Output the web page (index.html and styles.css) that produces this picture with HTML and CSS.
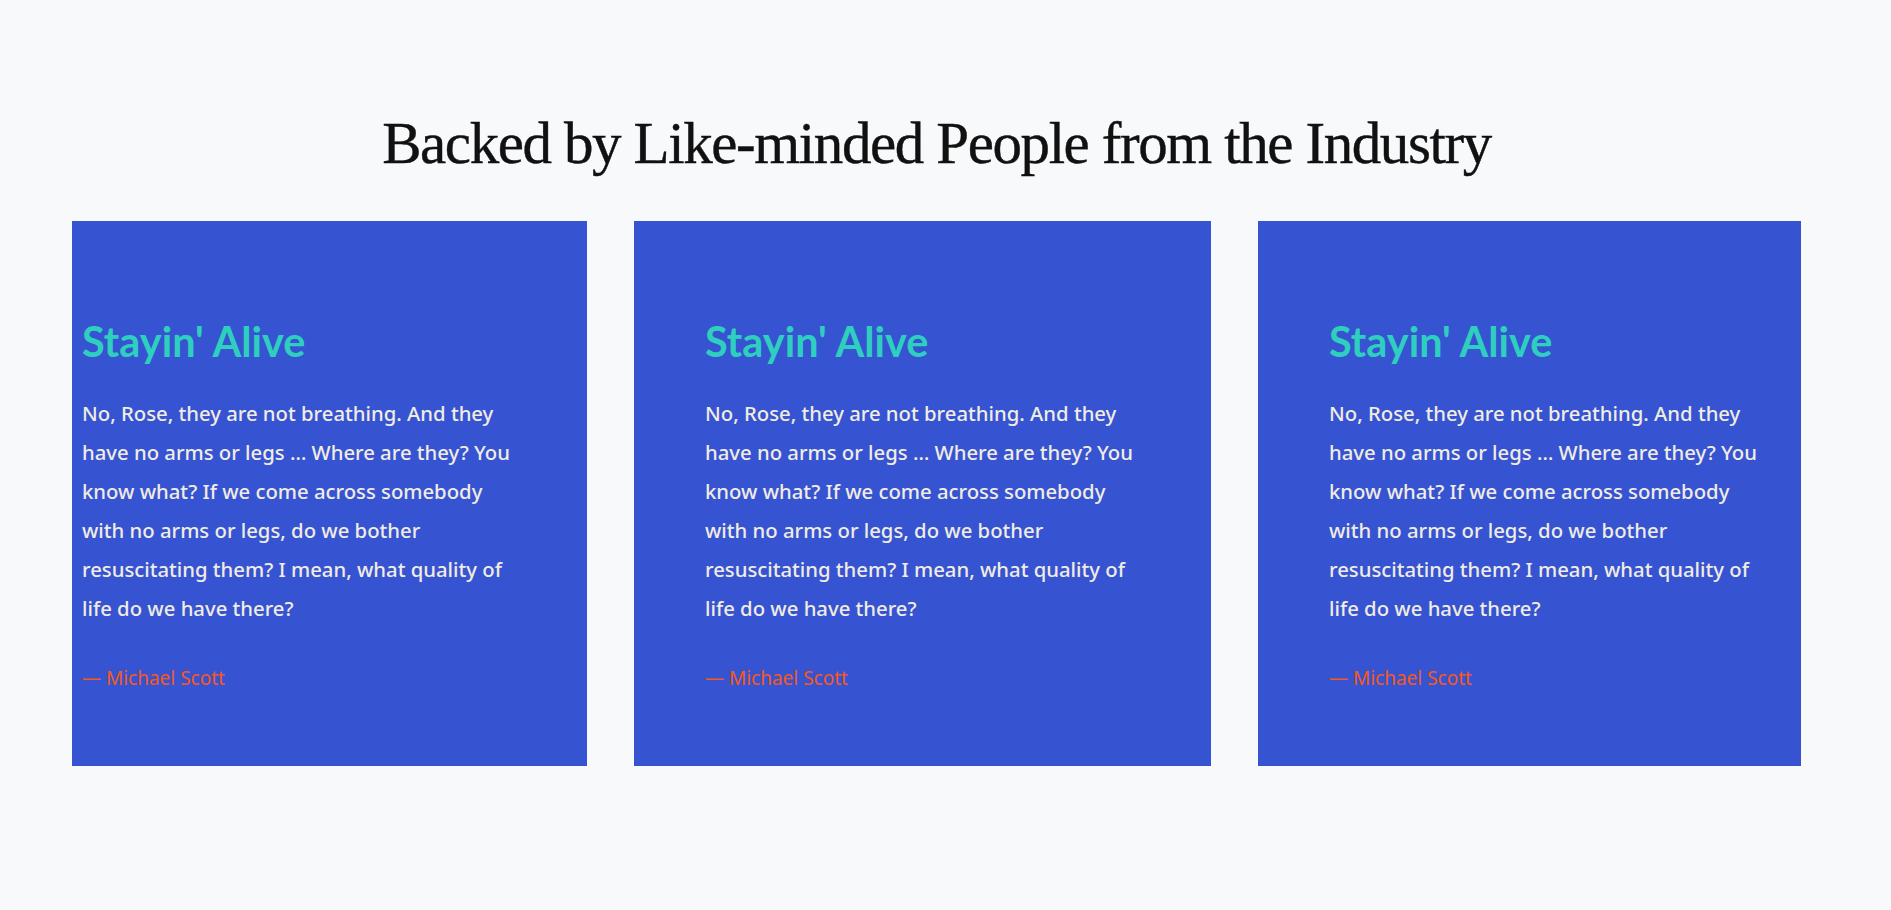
FILE: index.html
```html
<!DOCTYPE html>
<html lang="en">
<head>
<meta charset="utf-8">
<title>Backed by Like-minded People from the Industry</title>
<link rel="stylesheet" href="styles.css">
</head>
<body>
<section class="backers">
  <h1 class="backers__title">Backed by Like-minded People from the Industry</h1>
  <div class="backers__cards">
    <article class="card card--first">
      <h2 class="card__title">Stayin' Alive</h2>
      <p class="card__text">No, Rose, they are not breathing. And they have no arms or legs … Where are they? You know what? If we come across somebody with no arms or legs, do we bother resuscitating them? I mean, what quality of life do we have there?</p>
      <p class="card__author">— Michael Scott</p>
    </article>
    <article class="card card--second">
      <h2 class="card__title">Stayin' Alive</h2>
      <p class="card__text">No, Rose, they are not breathing. And they have no arms or legs … Where are they? You know what? If we come across somebody with no arms or legs, do we bother resuscitating them? I mean, what quality of life do we have there?</p>
      <p class="card__author">— Michael Scott</p>
    </article>
    <article class="card card--third">
      <h2 class="card__title">Stayin' Alive</h2>
      <p class="card__text">No, Rose, they are not breathing. And they have no arms or legs … Where are they? You know what? If we come across somebody with no arms or legs, do we bother resuscitating them? I mean, what quality of life do we have there?</p>
      <p class="card__author">— Michael Scott</p>
    </article>
  </div>
</section>
</body>
</html>
```

FILE: styles.css
```css
* { box-sizing: border-box; }

body {
  margin: 0;
  background: #f8f9fb;
  font-family: "Noto Sans", "Lato", sans-serif;
}

.backers {
  padding-top: 103px;
  padding-right: 18px;
}

.backers__title {
  margin: 0;
  text-align: center;
  font-family: "Liberation Serif", "Times New Roman", serif;
  font-weight: 400;
  font-size: 59px;
  line-height: 80px;
  letter-spacing: -1.4px;
  color: #111;
  -webkit-text-stroke: 0.4px #111;
}

.backers__cards {
  display: flex;
  gap: 47px;
  margin-top: 38px;
  padding-left: 72px;
}

.card {
  height: 545px;
  background: #3654d1;
  padding-top: 90px;
}

.card--first { width: 515px; padding-left: 10px; }
.card--second { width: 577px; padding-left: 71px; }
.card--third { width: 543px; padding-left: 71px; }

.card__title {
  margin: 0;
  font-family: "Lato", "Noto Sans", sans-serif;
  font-size: 41.5px;
  line-height: 60px;
  font-weight: 700;
  color: #2ecfbf;
}

.card__text {
  margin: 23px 0 0;
  max-width: 445px;
  font-size: 20.3px;
  font-weight: 500;
  line-height: 39px;
  color: #f0ece4;
}

.card__author {
  margin: 35px 0 0;
  font-size: 19px;
  font-weight: 400;
  line-height: 30px;
  color: #f5581a;
}
```
